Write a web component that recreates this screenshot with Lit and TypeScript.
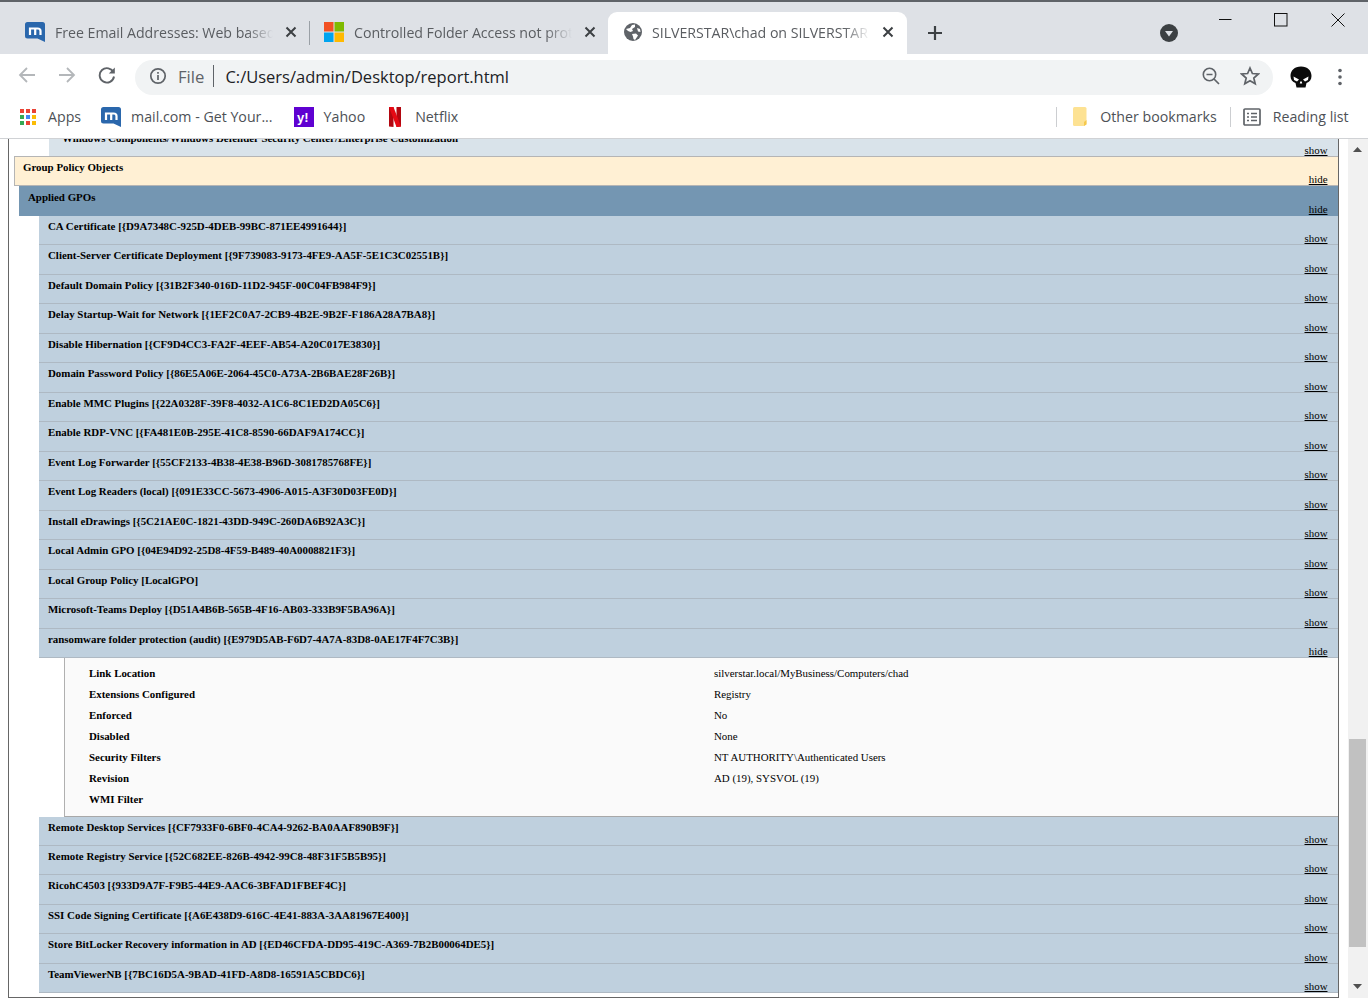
import { LitElement, html, css, svg } from "lit";
import { customElement } from "lit/decorators.js";

const gpos: [string, boolean?][] = [
  ["CA Certificate [{D9A7348C-925D-4DEB-99BC-871EE4991644}]"],
  ["Client-Server Certificate Deployment [{9F739083-9173-4FE9-AA5F-5E1C3C02551B}]"],
  ["Default Domain Policy [{31B2F340-016D-11D2-945F-00C04FB984F9}]"],
  ["Delay Startup-Wait for Network [{1EF2C0A7-2CB9-4B2E-9B2F-F186A28A7BA8}]"],
  ["Disable Hibernation [{CF9D4CC3-FA2F-4EEF-AB54-A20C017E3830}]"],
  ["Domain Password Policy [{86E5A06E-2064-45C0-A73A-2B6BAE28F26B}]"],
  ["Enable MMC Plugins [{22A0328F-39F8-4032-A1C6-8C1ED2DA05C6}]"],
  ["Enable RDP-VNC [{FA481E0B-295E-41C8-8590-66DAF9A174CC}]"],
  ["Event Log Forwarder [{55CF2133-4B38-4E38-B96D-3081785768FE}]"],
  ["Event Log Readers (local) [{091E33CC-5673-4906-A015-A3F30D03FE0D}]"],
  ["Install eDrawings [{5C21AE0C-1821-43DD-949C-260DA6B92A3C}]"],
  ["Local Admin GPO [{04E94D92-25D8-4F59-B489-40A0008821F3}]"],
  ["Local Group Policy [LocalGPO]"],
  ["Microsoft-Teams Deploy [{D51A4B6B-565B-4F16-AB03-333B9F5BA96A}]"],
  ["ransomware folder protection (audit) [{E979D5AB-F6D7-4A7A-83D8-0AE17F4F7C3B}]", true],
  ["Remote Desktop Services [{CF7933F0-6BF0-4CA4-9262-BA0AAF890B9F}]"],
  ["Remote Registry Service [{52C682EE-826B-4942-99C8-48F31F5B5B95}]"],
  ["RicohC4503 [{933D9A7F-F9B5-44E9-AAC6-3BFAD1FBEF4C}]"],
  ["SSI Code Signing Certificate [{A6E438D9-616C-4E41-883A-3AA81967E400}]"],
  ["Store BitLocker Recovery information in AD [{ED46CFDA-DD95-419C-A369-7B2B00064DE5}]"],
  ["TeamViewerNB [{7BC16D5A-9BAD-41FD-A8D8-16591A5CBDC6}]"],
];

const details: [string, string][] = [
  ["Link Location", "silverstar.local/MyBusiness/Computers/chad"],
  ["Extensions Configured", "Registry"],
  ["Enforced", "No"],
  ["Disabled", "None"],
  ["Security Filters", "NT AUTHORITY\\Authenticated Users"],
  ["Revision", "AD (19), SYSVOL (19)"],
  ["WMI Filter", ""],
];

const mailIcon = html`<svg class="ic20" viewBox="0 0 20 20">
  <path d="M0 2.5Q0 0 2.5 0H17.5Q20 0 20 2.5V20L12.5 16.5H2.5Q0 16.5 0 14Z" fill="#2a67ac"/>
  <path d="M5 13V6.5H12.5Q15.5 6.5 15.5 9V13M10.2 6.5V13" fill="none" stroke="#fff" stroke-width="2.2"/>
</svg>`;
const msIcon = html`<svg class="ic20" viewBox="0 0 20 20">
  <rect width="9.5" height="9.5" fill="#f25022"/><rect x="10.5" width="9.5" height="9.5" fill="#7fba00"/>
  <rect y="10.5" width="9.5" height="9.5" fill="#00a4ef"/><rect x="10.5" y="10.5" width="9.5" height="9.5" fill="#ffb900"/>
</svg>`;
const globeIcon = html`<svg class="ic18" viewBox="0 0 18 18">
  <circle cx="9" cy="9" r="9" fill="#5f6368"/>
  <path d="M2 6 6 5 8 2 11 1.5 11 4 8 6 9 8 6.5 9 4 8ZM8 11 12 10.5 14 12.5 11 17 9.5 16 9 13.5ZM13 5 16 6 16.5 9 14 8.5Z" fill="#fff"/>
</svg>`;
const closeX = html`<svg class="tabx" viewBox="0 0 12 12"><path d="M1.5 1.5 10.5 10.5M10.5 1.5 1.5 10.5" stroke="#3c4043" stroke-width="2" fill="none"/></svg>`;

@customElement("app-root")
export class AppRoot extends LitElement {
  static styles = css`
    :host { display: flex; flex-direction: column; width: 1368px; height: 998px; overflow: hidden; background: #fff; font-family: "Open Sans", "Liberation Sans", sans-serif; }
    svg { display: block; flex: none; }
    .ic20 { width: 20px; height: 20px; }
    .ic18 { width: 18px; height: 18px; }
    .strip { height: 52px; border-top: 2px solid #5f6368; background: #dee1e6; display: flex; align-items: flex-end; padding-left: 11px; flex: none; }
    .tab { width: 298px; height: 42px; display: flex; align-items: center; padding: 0 0 2px 14px; box-sizing: border-box; position: relative; font-size: 14.2px; letter-spacing: -0.04px; color: #5a5d61; }
    .tab .title { width: 218px; margin-left: 10px; white-space: nowrap; overflow: hidden; -webkit-mask-image: linear-gradient(to right, #000 88%, transparent 100%); mask-image: linear-gradient(to right, #000 88%, transparent 100%); }
    .tab.active { background: #fff; border-radius: 9px 9px 0 0; width: 299px; margin-left: 0; padding-left: 16px; }
    .tab.active .title { margin-left: 10px; }
    .tabx { width: 12px; height: 12px; margin-left: 11.5px; }
    .sep { width: 1px; height: 24px; background: #9aa0a6; align-self: flex-end; margin-bottom: 9px; }
    .plus { margin: 0 0 13px 20px; width: 16px; height: 16px; }
    .drop { margin: 0 0 12px 217px; width: 18px; height: 18px; }
    .wins { align-self: flex-start; display: flex; margin-left: 40px; margin-top: 11px; align-items: flex-start; }
    .wins svg { width: 14px; height: 14px; }
    .toolbar { height: 41px; display: flex; align-items: center; flex: none; padding-top: 0; box-sizing: border-box; }
    .nav { display: flex; align-items: center; padding-left: 18px; width: 135px; box-sizing: border-box; }
    .nav svg { width: 18px; height: 18px; }
    .omni { height: 35px; margin-top: 5px; width: 1138px; border-radius: 18px; background: #f1f3f4; display: flex; align-items: center; box-sizing: border-box; padding: 0 0 2px 14px; font-size: 16.5px; color: #202124; line-height: 33px; }
    .omni .file { color: #5f6368; margin-left: 11px; font-size: 16.7px; }
    .omni .bar { width: 1px; height: 22px; background: #5f6368; margin: 0 11px 0 9px; }
    .omni .url { width: 979px; white-space: nowrap; }
    .omni .act { display: flex; gap: 19px; margin-left: -3px; }
    .tail { display: flex; align-items: center; margin-top: 4px; }
    .marks { height: 44px; flex: none; box-sizing: border-box; border-bottom: 1px solid #d0d2d5; display: flex; align-items: center; font-size: 14.2px; color: #4d5156; padding-left: 20px; }
    .marks .m { display: flex; align-items: center; white-space: nowrap; }
    .marks .vsep { width: 1px; height: 20px; background: #ccced1; }
    .page { flex: 1; min-height: 0; display: flex; overflow: hidden; }
    .doc { margin-left: 8px; width: 1331px; height: 859px; box-sizing: border-box; border-left: 1.5px solid #666; border-right: 1.5px solid #666; border-bottom: 1.5px solid #666; overflow: hidden; font-family: "Liberation Serif", "Times New Roman", serif; font-size: 10.9px; color: #000; flex: none; }
    .row { display: flex; justify-content: space-between; align-items: flex-end; box-sizing: border-box; padding: 0 10.5px 0 0; height: 29.47px; position: relative; }
    .row .t { align-self: flex-start; font-weight: 700; line-height: 13px; padding-top: 4px; white-space: nowrap; }
    .row a { text-decoration: underline; color: #000; line-height: 12px; }
    .prev { margin-left: 40px; height: 17px; background: #d9e3ea; overflow: hidden; }
    .prev .t { margin-top: -7px; margin-left: 13px; padding-top: 0; }
    .gp { margin-left: 5px; height: 30px; background: #fff0d4; border: 1px solid #b5b5b5; border-right: 0; }
    .gp .t { margin-left: 8px; padding-top: 4px; }
    .ap { margin-left: 10px; height: 30px; background: #7496b2; }
    .ap .t { margin-left: 9px; padding-top: 5px; }
    .ap a { margin-bottom: 1px; }
    .gpo { margin-left: 30px; background: #bfd0de; border-bottom: 1px solid #aeb9c3; }
    .gpo .t { margin-left: 9px; padding-top: 4px; }
    .detail { margin-left: 55px; background: #fafafa; border-left: 1px solid #b0b0b0; border-bottom: 1px solid #a8a8a8; padding: 4.5px 0; height: 158.5px; box-sizing: border-box; }
    .d { display: grid; grid-template-columns: 625px 1fr; height: 21px; align-items: center; padding-left: 24px; }
    .d b { font-weight: 700; }
    .scroll { margin-left: 8.5px; width: 20px; background: #f1f1f1; display: flex; flex-direction: column; align-items: center; height: 859px; flex: none; box-sizing: border-box; padding-top: 8px; }
    .scroll .sp { height: 587px; flex: none; }
    .scroll .th { width: 17px; height: 208px; background: #c1c1c1; flex: none; }
    .arrow { width: 9px; height: 5px; }
  `;

  render() {
    return html`
      <div class="strip">
        <div class="tab">${mailIcon}<span class="title">Free Email Addresses: Web based email</span>${closeX}</div>
        <div class="sep"></div>
        <div class="tab">${msIcon}<span class="title">Controlled Folder Access not protecting</span>${closeX}</div>
        <div class="tab active">${globeIcon}<span class="title">SILVERSTAR\\chad on SILVERSTAR - Group</span>${closeX}</div>
        <svg class="plus" viewBox="0 0 16 16"><path d="M8 1V15M1 8H15" stroke="#3c4043" stroke-width="2.2" fill="none"/></svg>
        <svg class="drop" viewBox="0 0 18 18"><circle cx="9" cy="9" r="9" fill="#3c4043"/><path d="M5 7H13L9 12.5Z" fill="#dee1e6"/></svg>
        <div class="wins">
          <svg viewBox="0 0 14 14" style="margin-top:0"><path d="M1 6.5H13.5" stroke="#111" fill="none"/></svg>
          <svg viewBox="0 0 14 14" style="margin-left:42px"><rect x=".5" y=".5" width="12.5" height="12.5" stroke="#111" fill="none"/></svg>
          <svg viewBox="0 0 14 14" style="margin-left:43px"><path d="M.5.5 13.5 13.5M13.5.5.5 13.5" stroke="#111" fill="none"/></svg>
        </div>
      </div>
      <div class="toolbar">
        <div class="nav">
          <svg viewBox="0 0 18 18"><path d="M17 9H2M9 2 2 9 9 16" stroke="#b4b7ba" stroke-width="1.8" fill="none"/></svg>
          <svg viewBox="0 0 18 18" style="margin-left:22px"><path d="M1 9H16M9 2 16 9 9 16" stroke="#b4b7ba" stroke-width="1.8" fill="none"/></svg>
          <svg viewBox="0 0 18 18" style="margin-left:22px"><path d="M15.5 6.5A7.2 7.2 0 1 0 16 10.5" stroke="#5f6368" stroke-width="1.9" fill="none"/><path d="M16.8 1.5V7.6H10.8Z" fill="#5f6368"/></svg>
        </div>
        <div class="omni">
          <svg class="ic18" viewBox="0 0 18 18"><circle cx="9" cy="9" r="7.2" stroke="#5f6368" stroke-width="1.7" fill="none"/><path d="M9 8V13M9 5V6.8" stroke="#5f6368" stroke-width="1.7"/></svg>
          <span class="file">File</span><span class="bar"></span>
          <span class="url">C:/Users/admin/Desktop/report.html</span>
          <div class="act">
            <svg class="ic20" viewBox="0 0 20 20"><circle cx="8.5" cy="8.5" r="6.2" stroke="#5f6368" stroke-width="1.6" fill="none"/><path d="M13 13 18 18M5.5 8.5H11.5" stroke="#5f6368" stroke-width="1.7"/></svg>
            <svg class="ic20" viewBox="0 0 20 20"><path d="M10 2 12.4 7.5 18.3 8 13.8 12 15.2 17.8 10 14.7 4.8 17.8 6.2 12 1.7 8 7.6 7.5Z" stroke="#5f6368" stroke-width="1.7" fill="none"/></svg>
          </div>
        </div>
        <div class="tail">
          <svg style="margin-left:16px;width:24px;height:24px" viewBox="0 0 24 24">
            <path d="M12 1.5C5.5 1.5 1.5 5.5 1.5 11 1.5 14.5 3.5 17 6.5 18L7.5 22.5H16.5L17.5 18C20.5 17 22.5 14.5 22.5 11 22.5 5.5 18.5 1.5 12 1.5Z" fill="#0b0b0b"/>
            <path d="M4.5 11.5 10 14.5 8 16.5 5 15ZM19.5 11.5 14 14.5 16 16.5 19 15ZM11.2 16.5H12.8L13.2 18.5H10.8Z" fill="#fff"/>
          </svg>
          <svg style="margin-left:25px;width:4px;height:18px" viewBox="0 0 4 18"><circle cx="2" cy="2.5" r="1.8" fill="#5f6368"/><circle cx="2" cy="9" r="1.8" fill="#5f6368"/><circle cx="2" cy="15.5" r="1.8" fill="#5f6368"/></svg>
        </div>
      </div>
      <div class="marks">
        <div class="m">
          <svg style="width:16px;height:16px" viewBox="0 0 16 16">
            ${[["#ea4335","#ea4335","#ea4335"],["#34a853","#4285f4","#fbbc05"],["#34a853","#ea4335","#fbbc05"]].map((r, y) => r.map((c, x) => svg`<rect x=${x * 6} y=${y * 6} width="4" height="4" fill=${c}/>`))}
          </svg>
          <span style="margin-left:12px">Apps</span>
        </div>
        <div class="m" style="margin-left:20px">${mailIcon}<span style="margin-left:10px">mail.com - Get Your...</span></div>
        <div class="m" style="margin-left:21px">
          <svg class="ic20" viewBox="0 0 20 20"><rect width="20" height="20" fill="#5f01d1"/><text x="3" y="15" fill="#fff" font-family="Liberation Sans" font-weight="700" font-size="13">y!</text></svg>
          <span style="margin-left:10px">Yahoo</span>
        </div>
        <div class="m" style="margin-left:23px">
          <svg style="width:14px;height:20px" viewBox="0 0 14 20"><path d="M1 0H5.5V20L1 19.5Z" fill="#b20710"/><path d="M8.5 0H13V19.5L8.5 20Z" fill="#b20710"/><path d="M1 0H5.5L13 19.5 8.5 20Z" fill="#e50914"/></svg>
          <span style="margin-left:13px">Netflix</span>
        </div>
        <div class="vsep" style="margin-left:598px"></div>
        <div class="m" style="margin-left:16px">
          <svg style="width:17px;height:19px" viewBox="0 0 17 19"><path d="M1.5 0H12Q13.5 0 13.5 1.5V17L11 19H1.5Q0 19 0 17.5V1.5Q0 0 1.5 0Z" fill="#fde293"/><path d="M13.5 13V17.5L11 19V15Z" fill="#f5c84c"/></svg>
          <span style="margin-left:10px">Other bookmarks</span>
        </div>
        <div class="vsep" style="margin-left:13px"></div>
        <div class="m" style="margin-left:12px">
          <svg style="width:18px;height:18px" viewBox="0 0 18 18"><rect x="1" y="1" width="16" height="16" rx="1" stroke="#5f6368" stroke-width="1.7" fill="none"/><path d="M4 5.5H6M8 5.5H14M4 9H6M8 9H14M4 12.5H6M8 12.5H14" stroke="#5f6368" stroke-width="1.5"/></svg>
          <span style="margin-left:12px">Reading list</span>
        </div>
      </div>
      <div class="page">
        <div class="doc">
          <div class="row prev"><span class="t">Windows Components/Windows Defender Security Center/Enterprise Customization</span><a>show</a></div>
          <div class="row gp"><span class="t">Group Policy Objects</span><a>hide</a></div>
          <div class="row ap"><span class="t">Applied GPOs</span><a>hide</a></div>
          ${gpos.map(([name, open]) => html`
            <div class="row gpo"><span class="t">${name}</span><a>${open ? "hide" : "show"}</a></div>
            ${open ? html`<div class="detail">${details.map(([k, v]) => html`<div class="d"><b>${k}</b><span>${v}</span></div>`)}</div>` : ""}
          `)}
        </div>
        <div class="scroll">
          <svg class="arrow" viewBox="0 0 9 5"><path d="M4.5 0 9 5H0Z" fill="#505050"/></svg>
          <div class="sp"></div>
          <div class="th"></div>
          <svg class="arrow" style="margin-top:37px" viewBox="0 0 9 5"><path d="M0 0H9L4.5 5Z" fill="#505050"/></svg>
        </div>
      </div>
    `;
  }
}
